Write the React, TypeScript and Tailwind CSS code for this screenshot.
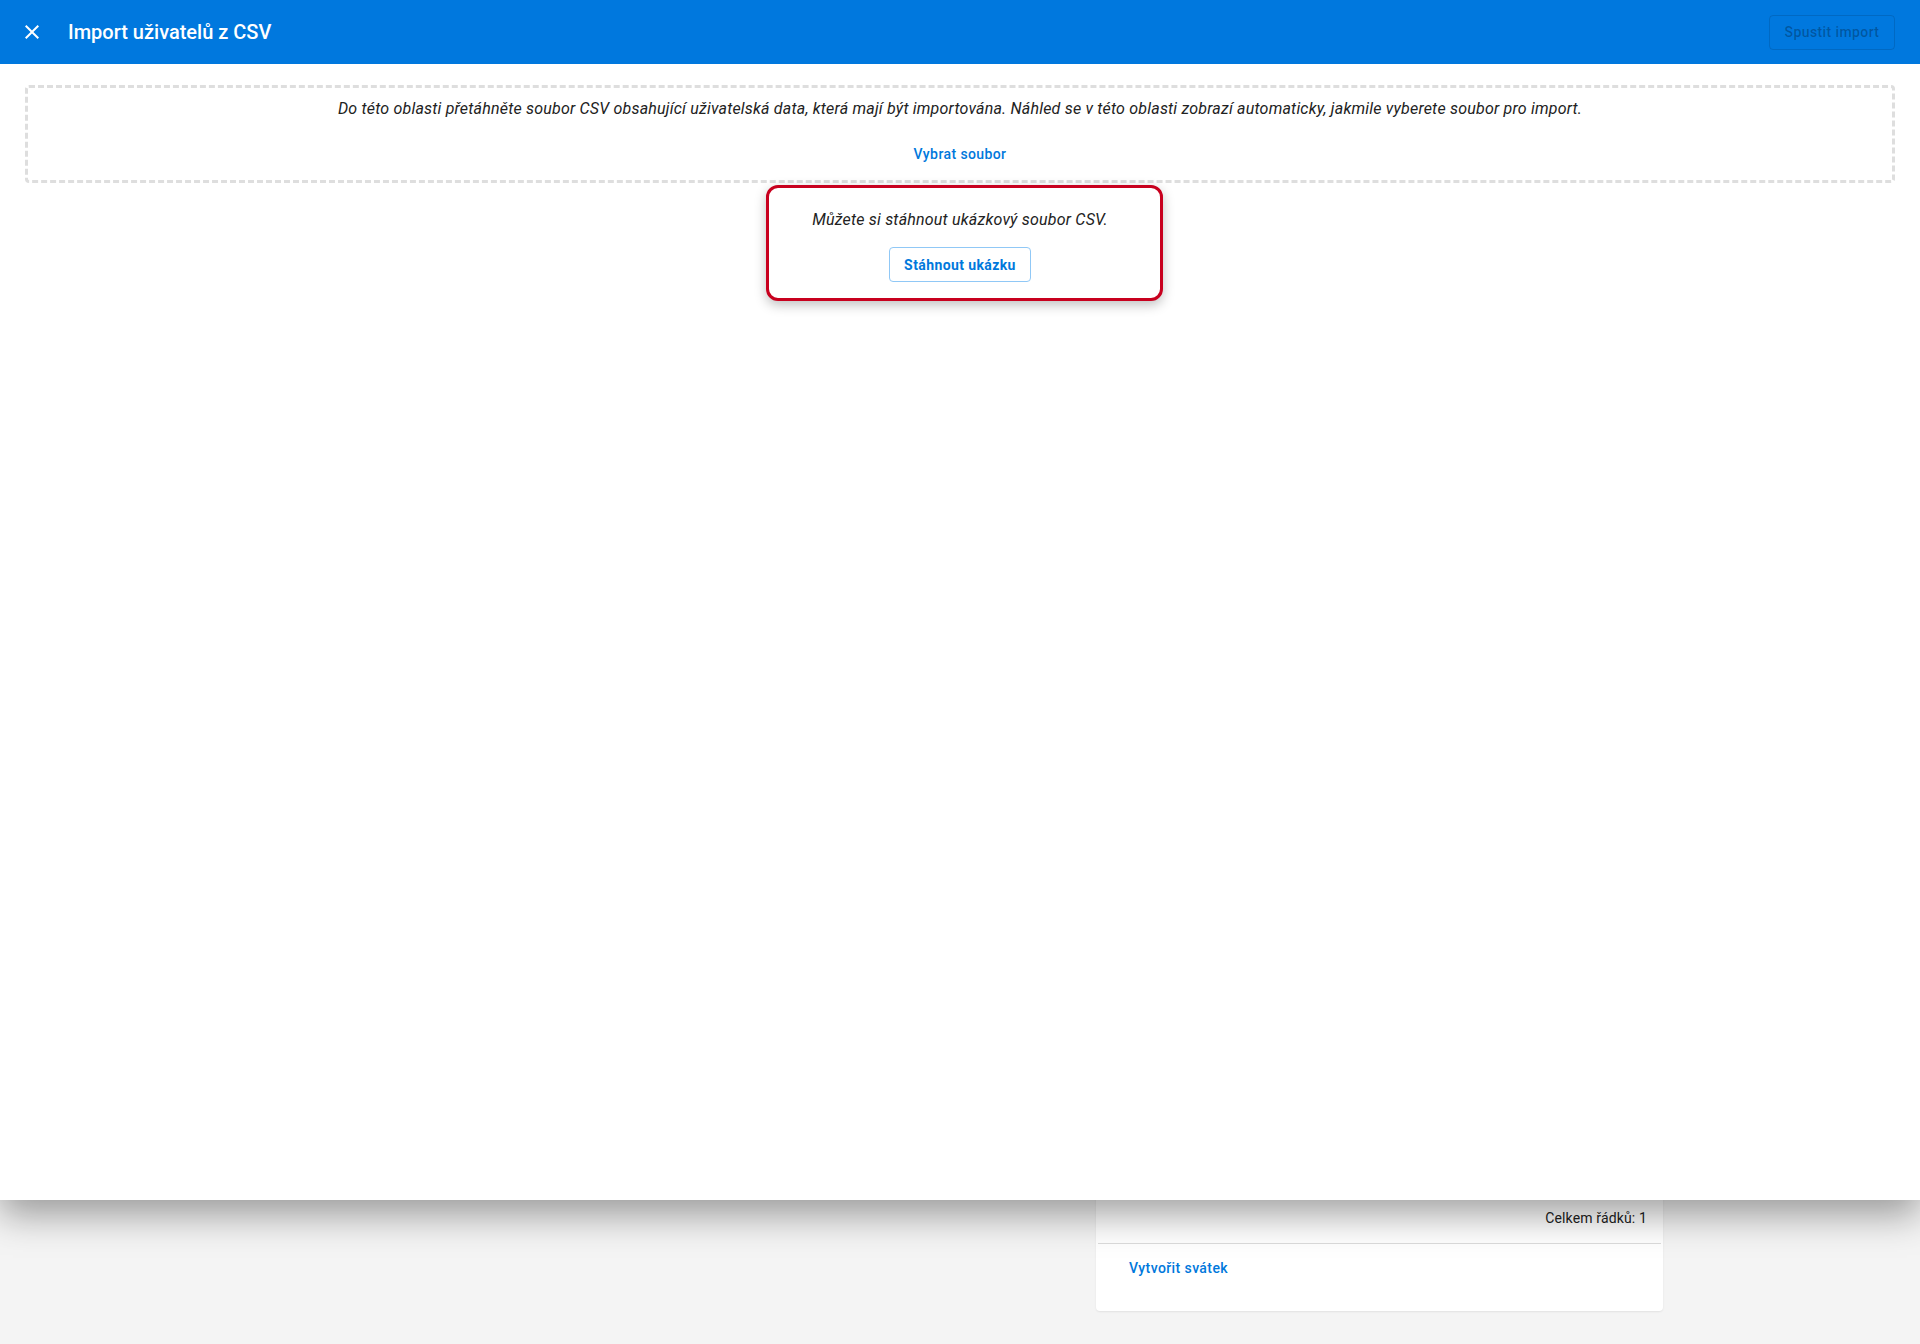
const font = { fontFamily: "Roboto, 'Noto Sans', sans-serif" };

const CloseIcon = () => (
  <svg viewBox="0 0 24 24" className="w-6 h-6" fill="currentColor" aria-hidden="true">
    <path d="M19 6.41L17.59 5 12 10.59 6.41 5 5 6.41 10.59 12 5 17.59 6.41 19 12 13.41 17.59 19 19 17.59 13.41 12z" />
  </svg>
);

export default function App() {
  return (
    <div className="relative h-[1344px] overflow-hidden bg-[#f4f4f4] text-[#212121]" style={font}>
      {/* page behind the dialog */}
      <div className="flex h-full flex-col justify-end pb-[33px] pl-[1096px]">
        <div className="flex h-[400px] w-[567px] flex-col justify-end rounded-b-[4px] bg-white shadow-[0_1px_2px_rgba(0,0,0,0.08)]">
          <div className="flex justify-end pb-[15px] pr-[16px] text-sm leading-5 tracking-[0.15px]">Celkem řádků: 1</div>
          <div className="mx-[2px] h-px bg-[#dcdcdc]" />
          <div className="pb-[31px] pl-[33px] pt-[12px]">
            <button className="text-sm font-medium leading-5 tracking-[0.4px] text-[#0078dc]">Vytvořit svátek</button>
          </div>
        </div>
      </div>

      {/* full screen dialog */}
      <div className="absolute inset-x-0 top-0 h-[1200px] bg-white shadow-[0_14px_36px_rgba(0,0,0,0.38)]">
        <div className="flex h-16 items-center bg-[#0078de] pl-5 pr-[25px] text-white">
          <button className="flex text-white">
            <CloseIcon />
          </button>
          <h1 className="ml-6 text-xl font-medium">Import uživatelů z CSV</h1>
          <button
            disabled
            className="ml-auto h-[35px] w-[126px] rounded-[4px] border border-[rgba(0,0,0,0.12)] text-sm font-medium tracking-[0.4px] text-[rgba(0,0,0,0.28)]"
          >
            Spustit import
          </button>
        </div>

        <div className="mx-[25px] mt-[21px] flex h-[98px] flex-col items-center rounded-[4px] border-[3px] border-dashed border-[#dedede] pt-[9px]">
          <p className="text-base italic leading-6 tracking-[0.2px] text-[#222]">
            Do této oblasti přetáhněte soubor CSV obsahující uživatelská data, která mají být importována. Náhled se v této oblasti zobrazí automaticky, jakmile vyberete soubor pro import.
          </p>
          <button className="mt-[23px] text-sm font-medium leading-5 tracking-[0.4px] text-[#0078dc]">Vybrat soubor</button>
        </div>

        <div className="flex justify-center pl-[8px] pt-[2px]">
          <div className="flex h-[116px] w-[397px] flex-col items-center rounded-[12px] border-[3px] border-[#c8001e] bg-white pr-[8px] pt-[20px] shadow-[0_4px_12px_rgba(0,0,0,0.25)]">
            <p className="text-base italic leading-6 tracking-[0.2px] text-[#222]">Můžete si stáhnout ukázkový soubor CSV.</p>
            <button className="mt-[15px] h-[35px] w-[142px] rounded-[4px] border border-[#90c8f6] text-sm font-bold tracking-[0.4px] text-[#0078dc]">
              Stáhnout ukázku
            </button>
          </div>
        </div>
      </div>
    </div>
  );
}
